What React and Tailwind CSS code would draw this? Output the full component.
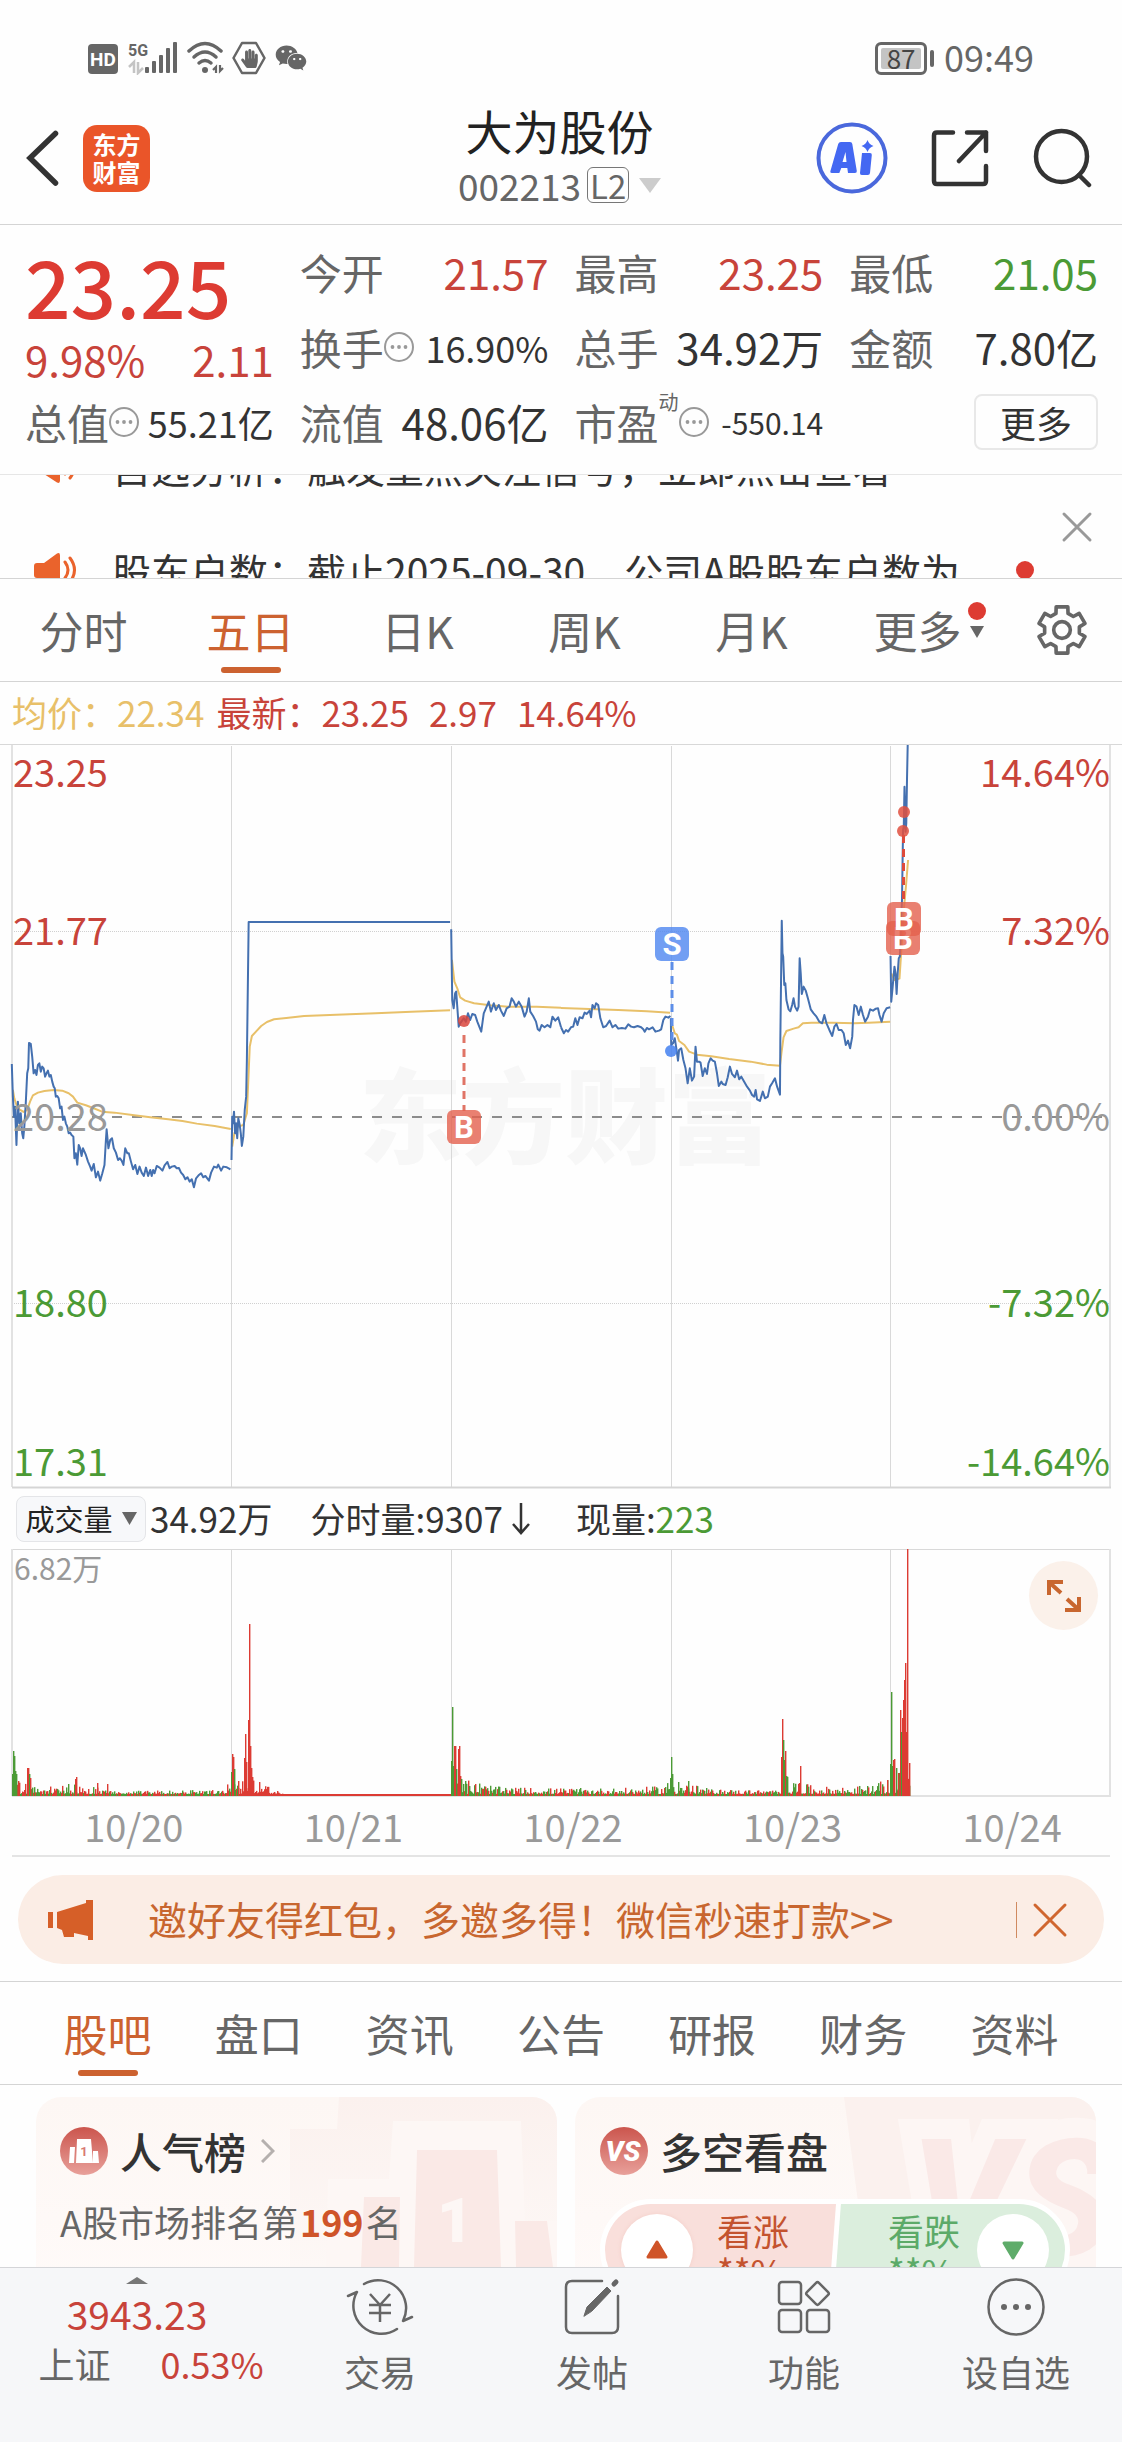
import React from "react";
import { FaHandPaper, FaWeixin } from "react-icons/fa";

const RED = "#c8433a";
const GREEN = "#4b9a35";
const FONT = '"Noto Sans CJK SC", sans-serif';

/* ---------- chart data ---------- */

// Sub-pixel plotting units: 2.795 per pixel across, 3 per pixel down.
const PRICE_LEFT = [
  "33,972 36,1070 39,1130 42,1100 46,1215 50,1085 54,1150 58,1120 62,1180 65,1195 68,1160 72,1090 76,1000 79,985 81,909 86,912 90,950 94,1000 98,990 102,1005 106,975 110,970 114,995 118,980 122,985 126,1010 130,1000 134,992 138,1010 142,1005 146,1025 150,1040 153,1045 156,1070 160,1068 164,1075 168,1105 172,1100 176,1140 180,1130 184,1150 188,1160 192,1180 196,1178 200,1185 205,1190 208,1255 212,1240 216,1274 220,1215 224,1225 228,1248 232,1225 236,1235 240,1245 246,1265 252,1280 256,1292 262,1272 268,1312 274,1295 280,1322 286,1300 292,1275 296,1200 298,1168 303,1225 308,1200 313,1195 318,1225 324,1238 330,1260 335,1255 340,1262 345,1275 350,1225 356,1240 360,1240 366,1265 372,1288 378,1275 384,1302 390,1280 396,1298 402,1308 408,1283 414,1308 420,1290 424,1308 428,1290 432,1300 438,1278 446,1283 454,1292 460,1276 468,1266 474,1285 480,1280 488,1278 494,1285 500,1284 506,1298 512,1305 518,1318 524,1312 530,1325 536,1318 542,1342 548,1315 556,1305 562,1300 568,1312 574,1308 584,1322 590,1298 598,1280 606,1283 610,1274 618,1292 624,1280 634,1282 644,1288",
  "647,1260 649,1130 651,1150 654,1115 657,1180 660,1150 663,1195 666,1135 670,1155 673,1180 676,1218 680,1190 684,1110 688,1070 690,960 695,546 1258,546",
  "1261,568 1264,780 1268,805 1272,760 1275,755 1278,800 1282,860 1286,850 1296,835 1302,845 1308,820 1314,840 1320,822 1328,825 1334,845 1345,875 1352,820 1358,805 1366,785 1372,815 1380,790 1386,810 1394,795 1400,812 1408,828 1416,805 1424,800 1430,775 1436,785 1442,800 1450,785 1458,800 1466,830 1472,815 1478,775 1482,815 1490,828 1498,845 1503,868 1508,872 1514,855 1522,862 1530,855 1538,862 1544,830 1552,842 1560,832 1568,862",
];
const PRICE_RIGHT = [
  "0,862 8,880 14,870 20,875 28,862 34,860 40,835 46,855 52,832 60,835 66,818 72,822 80,812 84,832 88,795 94,805 98,790 104,795 110,835 118,862 126,858 136,842 144,862 152,855 160,866 170,864 180,866 188,853 196,860 204,862 214,858 224,862 230,868 234,875 240,864 246,868 256,862 264,875 274,872 280,868 286,840 292,830 300,833 306,828",
  "307,835 308,915 313,910 318,895 323,930 327,962 330,930 336,925 342,960 348,985 354,1030 360,985 366,1022 372,1010 376,920 380,965 386,965 390,968 396,1008 402,985 408,1002 412,970 418,955 424,962 430,965 436,1000 441,1038 448,1025 452,1032 460,1035 466,1012 472,980 478,1002 486,1012 492,992 498,1018 504,1010 512,1025 520,1040 528,1052 534,1065 540,1070 544,1050 548,1078 556,1083 564,1055 570,1075 578,1070 584,1040 590,1030 598,1015 604,1040 612,1064 613,900 617,542 619,640 621,650 624,735 627,730 630,780 636,808 641,814 646,795 650,775 654,800 660,812 664,800 667,655 670,700 673,762 678,740 684,752 690,775 698,808 706,820 714,830 722,845 730,850 736,825 742,850 750,870 758,888 764,860 770,852 776,870 784,870 790,880 796,915 802,902 808,925 814,890 816,840 820,795 826,800 832,825 838,800 844,825 850,845 858,830 864,808 872,812 880,806 886,805 890,825 896,845 902,820 910,805 920,802",
  "921,648 923,785 927,740 932,680 935,700 938,762 941,700 944,655 947,650 950,570 953,480 956,270 958,260 960,140 963,275 965,250 967,120 969,14",
];
const AVG_LEFT = [
  "36,1050 40,1075 46,1095 54,1108 66,1116 76,1110 84,1085 92,1066 106,1058 124,1053 150,1050 174,1052 192,1060 204,1070 216,1088 240,1096 260,1104 285,1115 320,1118 370,1125 420,1132 470,1138 510,1143 550,1151 600,1158 645,1167",
  "649,1220 655,1180 665,1160 680,1155 690,1120 694,1020 698,920 704,888 716,874 730,858 746,846 766,838 800,834 850,828 940,824 1050,820 1150,815 1258,811",
  "1263,660 1270,725 1278,745 1286,772 1300,782 1325,790 1370,796 1420,800 1500,800 1568,803",
];
const AVG_RIGHT = [
  "0,804 80,807 160,810 240,814 305,818",
  "309,850 318,880 324,884 330,903 345,915 358,935 380,944 420,949 470,957 530,965 575,974 612,977 616,940 622,892 630,873 650,866 664,862 676,850 700,848 760,848 820,850 860,848 920,845",
  "923,700 932,720 946,716 950,650 958,510 964,440 970,360",
];

const SPIKES = [
  [12, 22, 0], [13, 45, 0], [14, 40, 0], [15, 25, 0], [16, 22, 0], [18, 15, 1], [27, 28, 1], [28, 28, 1], [29, 22, 0], [30, 18, 1],
  [68, 12, 0], [75, 17, 1], [76, 19, 1], [97, 13, 1], [107, 12, 1],
  [231, 24, 0], [232, 42, 1], [233, 39, 1], [234, 27, 0], [238, 15, 1], [244, 38, 1], [245, 62, 1], [246, 34, 1], [248, 76, 1],
  [249, 172, 1], [250, 50, 1], [251, 28, 1], [252, 19, 1],
  [451, 35, 0], [452, 89, 0], [453, 30, 0], [454, 50, 1], [455, 50, 1], [456, 27, 0], [458, 47, 1], [459, 50, 1], [460, 20, 1], [461, 17, 0],
  [670, 18, 0], [671, 39, 0], [672, 22, 0], [678, 14, 0], [688, 15, 0],
  [781, 39, 1], [782, 77, 1], [783, 56, 0], [784, 36, 0], [785, 45, 1], [786, 20, 0], [799, 13, 1], [800, 30, 1],
  [887, 16, 1], [890, 32, 0], [891, 104, 0], [892, 30, 0], [893, 36, 1], [894, 37, 1], [896, 28, 0], [898, 23, 1],
  [900, 86, 1], [901, 64, 0], [902, 78, 1], [903, 96, 1], [904, 116, 1], [905, 133, 1], [906, 64, 1], [907, 247, 1], [909, 33, 1],
];
const ENVELOPE = [
  [12, 11], [30, 12], [45, 7], [70, 10], [95, 7], [110, 3], [190, 4], [220, 7], [240, 15], [258, 13], [272, 5], [282, 2], [450, 2],
  [452, 22], [465, 16], [480, 12], [500, 7], [560, 6], [620, 6], [660, 8], [672, 16], [695, 9], [710, 5], [760, 4], [778, 4],
  [786, 18], [805, 10], [830, 7], [870, 9], [890, 16], [898, 22], [909, 30],
];

function envelopeAt(x) {
  for (let i = 1; i < ENVELOPE.length; i++) {
    const [x1, v1] = ENVELOPE[i];
    const [x0, v0] = ENVELOPE[i - 1];
    if (x <= x1) return v0 + ((v1 - v0) * (x - x0)) / (x1 - x0);
  }
  return 2;
}

function buildBars() {
  let seed = 41;
  const rand = () => {
    seed = (seed * 1103515245 + 12345) % 2147483648;
    return seed / 2147483648;
  };
  const bars = [];
  for (let x = 12; x < 910; x++) {
    const limitUp = x > 282 && x < 451;
    const r = rand();
    const c = rand();
    bars.push([x, limitUp ? 2 : 2 + envelopeAt(x) * r * r, limitUp || (x > 240 && x < 282) ? 1 : c > 0.5 ? 1 : 0]);
  }
  return bars.concat(SPIKES);
}
const BARS = buildBars();

/* ---------- icons ---------- */

const GEAR = Array.from({ length: 6 })
  .flatMap((_, k) => {
    const a = 60 * k - 90;
    return [[23, a - 14], [23, a + 14], [17, a + 20], [17, a + 40]];
  })
  .map(([r, d]) => `${(25 + r * Math.cos((d * Math.PI) / 180)).toFixed(1)},${(25 + r * Math.sin((d * Math.PI) / 180)).toFixed(1)}`)
  .join(" ");

function MoreDots() {
  return (
    <svg className="size-[30px] shrink-0" viewBox="0 0 30 30" fill="none" aria-hidden="true">
      <circle cx="15" cy="15" r="14" stroke="#999" strokeWidth="2" />
      <circle cx="8.5" cy="15" r="1.9" fill="#999" />
      <circle cx="15" cy="15" r="1.9" fill="#999" />
      <circle cx="21.5" cy="15" r="1.9" fill="#999" />
    </svg>
  );
}

function Speaker() {
  return (
    <svg className="h-9 w-11 shrink-0" viewBox="0 0 44 36" fill="none" aria-hidden="true">
      <path d="M3 11h7L23 1.500q3-1.500 3 2v29q0 3.500-3 2L10 26H3q-3 0-3-3V14q0-3 3-3z" fill="#ea632c" />
      <path d="M31 10q6 8 0 16M36 6q9 12 0 24" stroke="#ea632c" strokeWidth="3" strokeLinecap="round" />
    </svg>
  );
}

/* ---------- sections ---------- */

function StatusBar() {
  return (
    <div className="flex h-[92px] items-center justify-between pt-[26px] pr-[88px] pb-[2px] pl-[88px] text-[#666]">
      <div className="flex items-center">
        <svg className="h-[34px] w-[136px]" viewBox="0 0 136 34" aria-hidden="true">
          <rect x="0" y="3" width="30" height="30" rx="4" fill="#666" />
          <text x="15" y="24.500" fontSize="19" fontWeight="700" fill="#fff" textAnchor="middle" fontFamily="Roboto, sans-serif">HD</text>
          <text x="40" y="15" fontSize="16" fontWeight="700" fill="#666" fontFamily="Roboto, sans-serif">5G</text>
          <path d="M41 26l5-5v11M50 21v11l5-5" stroke="#c4c4c4" strokeWidth="2.500" fill="none" />
          <g fill="#666">
            <rect x="57" y="26" width="4" height="6" rx="1" />
            <rect x="64" y="20" width="4" height="12" rx="1" />
            <rect x="71" y="14" width="4" height="18" rx="1" />
            <rect x="78" y="7" width="4" height="25" rx="1" />
            <rect x="85" y="1" width="4" height="31" rx="1" />
          </g>
          <g fill="none" stroke="#666" strokeWidth="3.500" strokeLinecap="round">
            <path d="M101 10q16-15 32 0" />
            <path d="M106 16q11-10 22 0" />
            <path d="M111 22q6-5 12 0" />
          </g>
          <circle cx="117" cy="29" r="3" fill="#666" />
          <path d="M125 29l3-3v6M132 24v6l3-3" stroke="#666" strokeWidth="2.200" fill="none" />
        </svg>
        <span className="relative ml-2 flex h-[34px] w-[34px] items-center justify-center">
          <svg className="absolute inset-0" viewBox="0 0 34 34" fill="none" aria-hidden="true">
            <path d="M10 2h14l8.500 15L24 32H10L1.500 17z" stroke="#666" strokeWidth="2.500" strokeLinejoin="round" />
          </svg>
          <FaHandPaper size={19} />
        </span>
        <FaWeixin size={32} className="ml-[9px]" />
      </div>
      <div className="flex items-center">
        <span className="flex h-[33px] w-[52px] items-center justify-center rounded-[6px] border-[3px] border-[#666] p-[3px]">
          <span className="flex h-full w-full items-center justify-center rounded-[2px] bg-[#c4c4c4] text-[26px] leading-none text-[#444]">87</span>
        </span>
        <span className="ml-[3px] h-[17px] w-[4px] rounded-sm bg-[#666]" />
        <span className="ml-[10px] pb-1 text-[36px] leading-none">09:49</span>
      </div>
    </div>
  );
}

function Header() {
  return (
    <header className="grid h-[133px] grid-cols-[1fr_auto_1fr] items-center border-b border-[#d4d4d4] pr-[29px] pl-[26px]">
      <div className="flex items-center">
        <button type="button" aria-label="返回">
          <svg className="h-[56px] w-[33px]" viewBox="0 0 33 56" fill="none">
            <path d="M29.500 3.500L4 28l25.500 25" stroke="#333" strokeWidth="5.500" strokeLinecap="round" strokeLinejoin="miter" />
          </svg>
        </button>
        <button type="button" className="ml-6 grid size-[67px] content-center rounded-[14px] bg-[#ea5529] text-center text-[24px] leading-[28px] font-bold text-white">
          <span>东方</span>
          <span>财富</span>
        </button>
      </div>
      <div className="flex flex-col items-center">
        <h1 className="text-[47px] leading-[54px] text-[#222]">大为股份</h1>
        <button type="button" className="flex h-[56px] items-center text-[37px] leading-none text-[#666]">
          <span>002213</span>
          <span className="ml-[6px] flex h-[36px] w-[42px] items-center justify-center rounded-[6px] border border-[#777] text-[33px]">L2</span>
          <svg className="ml-[10px] h-[15px] w-[22px]" viewBox="0 0 22 15" aria-hidden="true"><path d="M0 0h22L11 15z" fill="#ccc" /></svg>
        </button>
      </div>
      <div className="flex items-center justify-end">
        <button type="button" aria-label="Ai">
          <svg className="size-[72px]" viewBox="0 0 72 72">
            <circle cx="36" cy="36" r="33.500" fill="none" stroke="#4a68dc" strokeWidth="4" />
            <path fillRule="evenodd" d="M25 20h9q2 0 2.300 2l4.500 27q.2 2-1.800 2h-7l-.7-5h-6l-2 5h-7.500q-2 0-1.300-2.200l7.700-26.800q.6-2 2.800-2zM26.500 40h4l-1-10z" fill="#4468f2" />
            <path d="M46 31h8q2 0 1.800 2l-1.800 18q-.2 2-2.200 2h-6q-2 0-1.800-2l2-20z" fill="#4468f2" />
            <path d="M51.500 18q1.500 4.500 6 6-4.500 1.500-6 6-1.500-4.500-6-6 4.500-1.500 6-6z" fill="#4468f2" />
          </svg>
        </button>
        <button type="button" aria-label="分享" className="ml-[43px]">
          <svg className="size-[58px]" viewBox="0 0 58 58" fill="none" stroke="#333" strokeWidth="4.500" strokeLinecap="round" strokeLinejoin="round">
            <path d="M22 3.500H6Q3 3.500 3 6.500V52q0 3 3 3h46q3 0 3-3V37" />
            <path d="M36 3.500h19V22M55 3.500L28 32" />
          </svg>
        </button>
        <button type="button" aria-label="搜索" className="ml-[44px]">
          <svg className="size-[60px]" viewBox="0 0 60 60" fill="none" stroke="#333" strokeWidth="4.500" strokeLinecap="round">
            <circle cx="28.500" cy="28.500" r="25.500" />
            <path d="M46 47l10 10" />
          </svg>
        </button>
      </div>
    </header>
  );
}

function Stat({ label, value, color = "text-[#333]", size = "text-[42px]", icon, sup }) {
  return (
    <div className="flex h-[75px] items-center justify-between text-[42px] leading-none whitespace-nowrap">
      <span className="flex items-center text-[#666]">
        {label}
        {sup && <sup className="mb-5 text-[20px] leading-none">{sup}</sup>}
        {icon && <MoreDots />}
      </span>
      <span className={`${size} ${color}`}>{value}</span>
    </div>
  );
}

function Quote() {
  return (
    <section className="grid grid-cols-4 gap-x-[26px] border-b border-[#e6e6e6] pt-[9px] pr-6 pb-[15px] pl-[25px]">
      <div>
        <div className="flex h-[100px] items-center text-[80px] leading-none font-medium text-[#dd3b32]">23.25</div>
        <div className="flex h-[50px] items-center justify-between text-[42px] leading-none text-[#c8433a]">
          <span>9.98%</span>
          <span>2.11</span>
        </div>
        <Stat label="总值" value="55.21亿" size="text-[36px]" icon />
      </div>
      <div>
        <Stat label="今开" value="21.57" color="text-[#c8433a]" />
        <Stat label="换手" value="16.90%" size="text-[36px]" icon />
        <Stat label="流值" value="48.06亿" />
      </div>
      <div>
        <Stat label="最高" value="23.25" color="text-[#c8433a]" />
        <Stat label="总手" value="34.92万" />
        <Stat label="市盈" value="-550.14" size="text-[30px]" icon sup="动" />
      </div>
      <div>
        <Stat label="最低" value="21.05" color="text-[#4b9a35]" />
        <Stat label="金额" value="7.80亿" />
        <div className="flex h-[75px] items-center justify-end">
          <button type="button" className="h-[56px] w-[124px] rounded-lg border-2 border-[#e8e8e8] text-[36px] leading-none text-[#333]">更多</button>
        </div>
      </div>
    </section>
  );
}

function Ticker() {
  const items = ["自选分析：触发重点关注信号，立即点击查看", "股东户数：截止2025-09-30，公司A股股东户数为"];
  return (
    <section className="flex h-[104px] items-center overflow-hidden border-b border-[#d4d4d4] pr-7 pl-[34px]">
      <div className="-mt-[16px] flex-1 self-start">
        {items.map((text, i) => (
          <div key={text} className={i === 0 ? "-mt-[45px] flex h-[104px] items-center" : "flex h-[104px] items-center"}>
            <Speaker />
            <span className="ml-[34px] text-[39px] leading-none whitespace-nowrap text-[#333]">{text}</span>
            {i === 1 && <span className="mr-[26px] ml-auto size-[18px] rounded-full bg-[#dd3b32]" />}
          </div>
        ))}
      </div>
      <button type="button" aria-label="关闭" className="shrink-0">
        <svg className="size-[34px]" viewBox="0 0 34 34" stroke="#999" strokeWidth="3" strokeLinecap="round"><path d="M4 4l26 26M30 4L4 30" /></svg>
      </button>
    </section>
  );
}

function PeriodTabs() {
  const tabs = ["分时", "五日", "日K", "周K", "月K"];
  return (
    <nav className="flex h-[103px] items-stretch border-b border-[#d4d4d4]">
      <div className="grid flex-1 grid-cols-6">
        {tabs.map((t) => (
          <button key={t} type="button" className={t === "五日" ? "relative text-[44px] leading-none text-[#cc6230]" : "text-[44px] leading-none text-[#666]"}>
            {t}
            {t === "五日" && <span className="absolute bottom-2 left-1/2 h-[6px] w-[60px] -translate-x-1/2 rounded-full bg-[#cc6230]" />}
          </button>
        ))}
        <button type="button" className="flex items-center justify-center pl-[22px] text-[44px] leading-none text-[#666]">
          更多
          <span className="mb-[21px] ml-[6px] flex w-[18px] flex-col items-center gap-[6px]">
            <span className="size-[18px] rounded-full bg-[#dd3b32]" />
            <svg className="h-3 w-[14px]" viewBox="0 0 14 12" aria-hidden="true"><path d="M0 0h14L7 12z" fill="#666" /></svg>
          </span>
        </button>
      </div>
      <button type="button" aria-label="设置" className="flex w-[120px] items-center justify-center">
        <svg className="size-[52px]" viewBox="0 0 50 50" fill="none" stroke="#666" strokeWidth="3.500" strokeLinejoin="round">
          <polygon points={GEAR} />
          <circle cx="25" cy="25" r="8" />
        </svg>
      </button>
    </nav>
  );
}

function Marker({ x, y, fill, children }) {
  return (
    <g>
      <rect x={x - 17} y={y - 17} width="34" height="34" rx="6" fill={fill} fillOpacity="0.8" />
      <text x={x} y={y + 11} fontSize="31" fontWeight="700" fill="#fff" textAnchor="middle" fontFamily="Roboto, sans-serif">{children}</text>
    </g>
  );
}

function PriceChart() {
  return (
    <svg className="block h-auto w-full" viewBox="0 0 1122 744" fontFamily={FONT} role="img" aria-label="五日走势">
      <text x="565" y="411" fontSize="103" fontWeight="900" fill="#f7f7f7" textAnchor="middle">东方财富</text>
      <g stroke="#d9d9d9" strokeWidth="1">
        <path d="M231.500 1V742M451.500 1V742M671.500 1V742M890.500 1V742" />
        <path d="M12 186.500H1110M12 558.500H1110" stroke="#d0d0d0" strokeDasharray="1 1" />
      </g>
      <path d="M12 0V742M1110 0V742" stroke="#e2e2e2" strokeWidth="2" />
      <path d="M12 742.500H1111" stroke="#d5d5d5" strokeWidth="2" />
      <path d="M12 372H1110" stroke="#8c8c8c" strokeWidth="2" strokeDasharray="10 10" />
      <g fill="none" strokeLinejoin="round">
        <g transform="translate(0 -5) scale(0.3578 0.3333)">
          {AVG_LEFT.map((p) => <polyline key={p} points={p} stroke="#e8c069" strokeWidth="2" vectorEffect="non-scaling-stroke" />)}
          {PRICE_LEFT.map((p) => <polyline key={p} points={p} stroke="#4470b0" strokeWidth="2" vectorEffect="non-scaling-stroke" />)}
        </g>
        <g transform="translate(561 -5) scale(0.3578 0.3333)">
          {AVG_RIGHT.map((p) => <polyline key={p} points={p} stroke="#e8c069" strokeWidth="2" vectorEffect="non-scaling-stroke" />)}
          {PRICE_RIGHT.map((p) => <polyline key={p} points={p} stroke="#4470b0" strokeWidth="2" vectorEffect="non-scaling-stroke" />)}
        </g>
      </g>
      <path d="M464 290V366" stroke="#e07466" strokeWidth="3" strokeDasharray="8 6" />
      <circle cx="464" cy="276" r="6" fill="#d9453c" fillOpacity="0.85" />
      <Marker x={464} y={382} fill="#e4604e">B</Marker>
      <path d="M672 217V300" stroke="#5d8ee8" strokeWidth="3" strokeDasharray="8 6" />
      <circle cx="671" cy="306" r="6" fill="#4380f0" fillOpacity="0.85" />
      <Marker x={672} y={199} fill="#4d86f0">S</Marker>
      <path d="M903.500 90V160" stroke="#dd4a3c" strokeWidth="3" strokeDasharray="8 6" />
      <circle cx="904" cy="67" r="6" fill="#e0503f" fillOpacity="0.85" />
      <circle cx="903" cy="86" r="6" fill="#e0503f" fillOpacity="0.85" />
      <Marker x={903} y={193} fill="#e4604e">B</Marker>
      <Marker x={904} y={174} fill="#e4604e">B</Marker>
      <g fontSize="38">
        <g fill={RED}>
          <text x="13" y="42">23.25</text>
          <text x="13" y="200">21.77</text>
          <text x="1110" y="42" textAnchor="end">14.64%</text>
          <text x="1110" y="200" textAnchor="end">7.32%</text>
        </g>
        <g fill="#999">
          <text x="13" y="386">20.28</text>
          <text x="1110" y="386" textAnchor="end">0.00%</text>
        </g>
        <g fill={GREEN}>
          <text x="13" y="572">18.80</text>
          <text x="13" y="731">17.31</text>
          <text x="1110" y="572" textAnchor="end">-7.32%</text>
          <text x="1110" y="731" textAnchor="end">-14.64%</text>
        </g>
      </g>
    </svg>
  );
}

function VolumeChart() {
  return (
    <div className="relative">
      <svg className="block h-auto w-full" viewBox="0 0 1122 248" fontFamily={FONT} role="img" aria-label="成交量">
        <g stroke="#d9d9d9" strokeWidth="1">
          <path d="M231.500 0V247M451.500 0V247M671.500 0V247M890.500 0V247" />
          <path d="M12 .5H1110" />
        </g>
        <path d="M12 0V247M1110 0V247M12 247H1111" stroke="#e2e2e2" strokeWidth="2" />
        {BARS.map(([x, h, up], i) => (
          <rect key={i} x={x} y={247 - h} width="1.400" height={h} fill={up ? "#dc3b33" : GREEN} />
        ))}
        <text x="14" y="31" fontSize="30" fill="#999">6.82万</text>
      </svg>
      <button type="button" aria-label="全屏" className="absolute top-[12px] right-[24px] flex size-[69px] items-center justify-center rounded-full bg-[#fbf1ea]">
        <svg className="size-[36px]" viewBox="0 0 36 36" fill="none" stroke="#c8662f" strokeWidth="4">
          <path d="M3 17V4H17M4 5l11 10M33 19v13H19M32 31L21 21" />
        </svg>
      </button>
    </div>
  );
}

function ChartPanel() {
  return (
    <section>
      <div className="flex h-[63px] items-center border-b border-[#d8d8d8] pb-1 pl-3 text-[35px] leading-none whitespace-nowrap text-[#c8433a]">
        <span className="text-[#e8c069]">均价：22.34</span>
        <span className="ml-3">最新：23.25</span>
        <span className="ml-5">2.97</span>
        <span className="ml-5">14.64%</span>
      </div>
      <PriceChart />
      <div className="flex h-[60px] items-center pl-4 text-[35px] leading-none whitespace-nowrap text-[#333]">
        <button type="button" className="flex h-[46px] w-[130px] items-center justify-center gap-[9px] rounded-lg border border-[#e4e5e8] bg-[#f7f8fa] pb-[2px] text-[29px] text-[#222]">
          成交量
          <svg className="h-[13px] w-[15px]" viewBox="0 0 15 13" aria-hidden="true"><path d="M0 0h15L7.500 13z" fill="#666" /></svg>
        </button>
        <span className="ml-1 pb-1">34.92万</span>
        <span className="ml-[38px] flex items-center pb-1">
          分时量:9307
          <svg className="mt-[3px] ml-[9px] h-[32px] w-[18px]" viewBox="0 0 18 32" fill="none" stroke="#333" strokeWidth="2.500" aria-label="↓"><path d="M9 0v30M1 21l8 9 8-9" /></svg>
        </span>
        <span className="ml-[46px] pb-1">现量:<span className="text-[#4b9a35]">223</span></span>
      </div>
      <VolumeChart />
      <div className="mx-3 flex h-[60px] items-center border-b-2 border-[#e4e4e4] text-[38px] leading-none text-[#999]">
        {["10/20", "10/21", "10/22", "10/23", "10/24"].map((d) => (
          <span key={d} className="flex-1 pl-[24px] text-center">{d}</span>
        ))}
      </div>
    </section>
  );
}

function Banner() {
  return (
    <section className="border-b border-[#d4d4d4] px-[18px] pt-[18px] pb-[17px]">
      <div className="flex h-[89px] items-center rounded-full bg-[#fbede5] pr-[36px] pl-[30px] text-[#c8662f]">
        <svg className="h-[40px] w-[46px]" viewBox="0 0 46 40" fill="#d65f28" aria-hidden="true">
          <rect x="0" y="12" width="5" height="16" />
          <path d="M9 12L38 3V0h7v40h-5v-4l-14-3v4H16l-2-7-5-2z" />
        </svg>
        <a href="#invite" className="ml-[54px] pb-[2px] text-[39px] leading-none whitespace-nowrap">邀好友得红包，多邀多得！微信秒速打款&gt;&gt;</a>
        <span className="ml-auto h-9 w-px bg-[#d08a60]" />
        <button type="button" aria-label="关闭" className="ml-[15px]">
          <svg className="size-[36px]" viewBox="0 0 36 36" stroke="#d0662f" strokeWidth="3" strokeLinecap="round"><path d="M3 3l30 30M33 3L3 33" /></svg>
        </button>
      </div>
    </section>
  );
}

function SectionTabs() {
  return (
    <nav className="flex h-[103px] items-stretch border-b border-[#d4d4d4] px-8">
      {["股吧", "盘口", "资讯", "公告", "研报", "财务", "资料"].map((t, i) => (
        <button key={t} type="button" className={i === 0 ? "relative flex-1 text-[44px] leading-none text-[#cc6230]" : "flex-1 text-[44px] leading-none text-[#666]"}>
          {t}
          {i === 0 && <span className="absolute bottom-2 left-1/2 h-[6px] w-[60px] -translate-x-1/2 rounded-full bg-[#cc6230]" />}
        </button>
      ))}
    </nav>
  );
}

function Badge({ children }) {
  return (
    <svg className="size-[48px] shrink-0" viewBox="0 0 48 48" aria-hidden="true">
      <defs>
        <linearGradient id="badge" x1="0" y1="0" x2="0" y2="1">
          <stop offset="0" stopColor="#cb554d" />
          <stop offset="1" stopColor="#e8a09a" />
        </linearGradient>
      </defs>
      <circle cx="24" cy="24" r="24" fill="url(#badge)" />
      {children}
    </svg>
  );
}

function Cards() {
  return (
    <section className="grid min-h-0 flex-1 grid-cols-2 gap-x-[18px] overflow-hidden pt-3 pr-[26px] pl-9">
      <article className="relative h-[240px] overflow-hidden rounded-[25px] bg-linear-to-b from-[#fdf7f4] to-[#fffbfa] pt-[30px] pl-6">
        <svg className="absolute top-0 right-0 h-[170px] w-[270px]" viewBox="250 0 270 170" aria-hidden="true">
          <defs>
            <linearGradient id="podium" x1="0" y1="0" x2="0" y2="1">
              <stop offset="0" stopColor="#fbf1ee" />
              <stop offset="1" stopColor="#fdf8f6" />
            </linearGradient>
          </defs>
          <path d="M302 0H520V170H253V32H300z" fill="url(#podium)" />
          <path d="M356 24H484L488 124H520V170H289L291 82H352z" fill="#fdf7f5" />
          <path d="M380 53H460L464 170H377zM327 100H363L362 170H324zM478 124H510L516 170H479z" fill="#fae9e6" />
          <text x="418" y="145" fontSize="62" fontWeight="900" fill="#fdf7f5" textAnchor="middle" fontFamily="Roboto, sans-serif">1</text>
        </svg>
        <div className="relative flex h-12 items-center">
          <Badge>
            <path d="M17 12h14l2 24H16zM10 20h5l-1 16H9zM33 24h5l1 12h-6z" fill="#fff" />
            <text x="24" y="29" fontSize="13" fontWeight="700" fill="#d97a73" textAnchor="middle" fontFamily="Roboto, sans-serif">1</text>
          </Badge>
          <h2 className="ml-3 text-[42px] leading-none font-medium text-[#333]">人气榜</h2>
          <svg className="ml-[15px] h-[24px] w-[14px]" viewBox="0 0 14 24" fill="none" stroke="#b5b0ae" strokeWidth="3" aria-hidden="true"><path d="M1 1l11 11L1 23" /></svg>
        </div>
        <p className="relative mt-7 text-[36px] leading-[36px] text-[#666]">A股市场排名第<b className="mx-[2px] font-bold text-[#cf5429]">199</b>名</p>
      </article>
      <article className="relative h-[240px] overflow-hidden rounded-[25px] bg-linear-to-b from-[#fdf7f4] to-[#fffbfa] pt-[30px] pr-[26px] pl-[25px]">
        <svg className="absolute top-0 right-0 h-[240px] w-[270px]" viewBox="250 0 270 240" aria-hidden="true">
          <path d="M268 0H520V240H300z" fill="#fbf1ee" />
          <text x="335" y="158" fontSize="162" fontWeight="900" fontStyle="italic" fill="#fae9e7" stroke="#fdf6f4" strokeWidth="40" paintOrder="stroke" fontFamily="Roboto, sans-serif">VS</text>
        </svg>
        <div className="relative flex h-12 items-center">
          <Badge>
            <text x="23" y="34" fontSize="28" fontWeight="900" fontStyle="italic" fill="#fff" textAnchor="middle" fontFamily="Roboto, sans-serif">VS</text>
          </Badge>
          <h2 className="ml-3 text-[42px] leading-none font-medium text-[#333]">多空看盘</h2>
        </div>
        <div className="relative mt-6 flex h-[102px] gap-[2px] overflow-hidden rounded-full border-[5px] border-white bg-white text-[36px] leading-[40px]">
          <button type="button" className="-mr-1 flex flex-1 items-start bg-[#f9dfdb] pt-[10px] pl-4 text-left text-[#c4532f] [clip-path:polygon(0_0,100%_0,97%_100%,0_100%)]">
            <span className="flex size-[72px] shrink-0 items-center justify-center rounded-full bg-white shadow-[0_0_4px_#f3cfc9]">
              <svg className="size-[24px]" viewBox="0 0 24 24" aria-hidden="true"><path d="M12 4l9 15H3z" fill="#cf5429" stroke="#cf5429" strokeWidth="3" strokeLinejoin="round" /></svg>
            </span>
            <span className="-mt-1 ml-[24px]">看涨<br />**%</span>
          </button>
          <button type="button" className="flex flex-1 items-start justify-end bg-[#dbeedd] pt-[10px] pr-4 text-left text-[#5caa68] [clip-path:polygon(3%_0,100%_0,100%_100%,0_100%)]">
            <span className="-mt-1 mr-[17px]">看跌<br />**%</span>
            <span className="flex size-[72px] shrink-0 items-center justify-center rounded-full bg-white">
              <svg className="size-[24px]" viewBox="0 0 24 24" aria-hidden="true"><path d="M12 20l9-15H3z" fill="#5fac6a" stroke="#5fac6a" strokeWidth="3" strokeLinejoin="round" /></svg>
            </span>
          </button>
        </div>
      </article>
    </section>
  );
}

function NavItem({ label, children }) {
  return (
    <button type="button" className="flex w-[212px] flex-col items-center text-[36px] leading-none text-[#666]">
      <svg className="mt-[7px] h-[64px] w-[68px]" viewBox="-34 -32 68 64" fill="none" stroke="#666" strokeWidth="2.500" strokeLinecap="round" strokeLinejoin="round" aria-hidden="true">
        {children}
      </svg>
      <span className="mt-[14px]">{label}</span>
    </button>
  );
}

function BottomNav() {
  return (
    <footer className="flex h-[175px] shrink-0 items-start border-t border-[#d4d5d8] bg-[#f6f7f9]">
      <button type="button" className="flex flex-1 flex-col items-center text-[39px] leading-none text-[#c8433a]">
        <svg className="mt-[9px] h-[7px] w-[22px]" viewBox="0 0 22 7" aria-hidden="true"><path d="M11 0l11 7H0z" fill="#777" /></svg>
        <span className="mt-[10px]">3943.23</span>
        <span className="mt-3 ml-7 flex gap-[50px] text-[36px]">
          <span className="text-[#666]">上证</span>
          <span>0.53%</span>
        </span>
      </button>
      <NavItem label="交易">
        <path d="M-16-23A28 28 0 0 1 23 14L32 10M17 22A28 28 0 0 1-23-15L-32-11" />
        <path d="M-10-13L0-2L10-13M0-2V15M-11-2H11M-11 6H11" strokeLinecap="butt" />
      </NavItem>
      <NavItem label="发帖">
        <path d="M10-26H-20Q-26-26-26-20V20Q-26 26-20 26H20Q26 26 26 20V-11" />
        <path d="M-8 9L-5 0L15-20L19-16L0 4z" fill="#666" strokeWidth="1" />
        <path d="M22-23L24-25" strokeWidth="5" />
      </NavItem>
      <NavItem label="功能">
        <rect x="-25" y="-25" width="22" height="22" rx="3" />
        <rect x="-25" y="3" width="22" height="22" rx="3" />
        <rect x="3" y="3" width="22" height="22" rx="3" />
        <rect x="5" y="-22" width="17" height="17" rx="2" transform="rotate(45 13.500 -13.500)" />
      </NavItem>
      <NavItem label="设自选">
        <circle r="27.500" />
        <g fill="#666" stroke="none"><circle cx="-12" r="3" /><circle r="3" /><circle cx="12" r="3" /></g>
      </NavItem>
    </footer>
  );
}

export default function App() {
  return (
    <div className="flex h-screen flex-col overflow-hidden bg-[#fefefe] font-['Noto_Sans_CJK_SC',sans-serif]">
      <StatusBar />
      <Header />
      <Quote />
      <Ticker />
      <PeriodTabs />
      <ChartPanel />
      <Banner />
      <SectionTabs />
      <Cards />
      <BottomNav />
    </div>
  );
}
